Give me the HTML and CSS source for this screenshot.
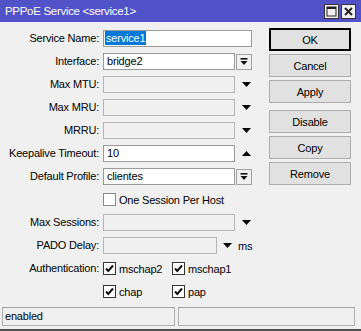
FILE: index.html
```html
<!DOCTYPE html>
<html>
<head>
<meta charset="utf-8">
<link rel="stylesheet" href="styles.css">
</head>
<body>
<div class="window">
  <div class="titlebar">
    <span class="title">PPPoE Service &lt;service1&gt;</span>
    <div class="tbtns">
      <span class="tbtn"><svg width="13" height="13" viewBox="0 0 13 13"><rect x="2" y="2" width="9" height="9" fill="none" stroke="#222" stroke-width="1"/><rect x="2" y="2" width="9" height="2" fill="#222"/></svg></span>
      <span class="tbtn"><svg width="13" height="13" viewBox="0 0 13 13"><path d="M3 3 L10 10 M10 3 L3 10" stroke="#222" stroke-width="2"/></svg></span>
    </div>
  </div>
  <div class="main">
    <div class="form">
      <label class="lbl">Service Name:</label>
      <div class="ctl"><div class="inp en full"><span class="sel">service1</span></div></div>

      <label class="lbl">Interface:</label>
      <div class="ctl"><div class="inp en w132">bridge2</div><span class="ddbtn"><svg width="10" height="10" viewBox="0 0 10 10"><rect x="1.5" y="1" width="7" height="1.6" fill="#111"/><polygon points="1.5,4 8.5,4 5,8" fill="#111"/></svg></span></div>

      <label class="lbl">Max MTU:</label>
      <div class="ctl"><div class="inp dis w132"></div><span class="arr"><svg width="9" height="5" viewBox="0 0 9 5"><polygon points="0,0 9,0 4.5,5" fill="#000"/></svg></span></div>

      <label class="lbl">Max MRU:</label>
      <div class="ctl"><div class="inp dis w132"></div><span class="arr"><svg width="9" height="5" viewBox="0 0 9 5"><polygon points="0,0 9,0 4.5,5" fill="#000"/></svg></span></div>

      <label class="lbl">MRRU:</label>
      <div class="ctl"><div class="inp dis w132"></div><span class="arr"><svg width="9" height="5" viewBox="0 0 9 5"><polygon points="0,0 9,0 4.5,5" fill="#000"/></svg></span></div>

      <label class="lbl">Keepalive Timeout:</label>
      <div class="ctl"><div class="inp en w132">10</div><span class="arr"><svg width="9" height="5" viewBox="0 0 9 5"><polygon points="0,5 9,5 4.5,0" fill="#000"/></svg></span></div>

      <label class="lbl">Default Profile:</label>
      <div class="ctl"><div class="inp en w132">clientes</div><span class="ddbtn"><svg width="10" height="10" viewBox="0 0 10 10"><rect x="1.5" y="1" width="7" height="1.6" fill="#111"/><polygon points="1.5,4 8.5,4 5,8" fill="#111"/></svg></span></div>

      <span class="lbl"></span>
      <div class="ctl"><span class="cb off"></span><span class="cbtext">One Session Per Host</span></div>

      <label class="lbl">Max Sessions:</label>
      <div class="ctl"><div class="inp dis w132"></div><span class="arr"><svg width="9" height="5" viewBox="0 0 9 5"><polygon points="0,0 9,0 4.5,5" fill="#000"/></svg></span></div>

      <label class="lbl">PADO Delay:</label>
      <div class="ctl"><div class="inp dis w114"></div><span class="arr2"><svg width="9" height="5" viewBox="0 0 9 5"><polygon points="0,0 9,0 4.5,5" fill="#000"/></svg></span><span class="unit">ms</span></div>

      <label class="lbl">Authentication:</label>
      <div class="cbrow">
        <span class="cbitem"><span class="cb on"><svg width="11" height="11" viewBox="0 0 11 11"><path d="M2 5.5 L4.3 8 L9 2.5" fill="none" stroke="#111" stroke-width="2"/></svg></span><span class="cbtext">mschap2</span></span>
        <span class="cbitem"><span class="cb on"><svg width="11" height="11" viewBox="0 0 11 11"><path d="M2 5.5 L4.3 8 L9 2.5" fill="none" stroke="#111" stroke-width="2"/></svg></span><span class="cbtext">mschap1</span></span>
      </div>

      <span class="lbl"></span>
      <div class="cbrow">
        <span class="cbitem"><span class="cb on"><svg width="11" height="11" viewBox="0 0 11 11"><path d="M2 5.5 L4.3 8 L9 2.5" fill="none" stroke="#111" stroke-width="2"/></svg></span><span class="cbtext">chap</span></span>
        <span class="cbitem"><span class="cb on"><svg width="11" height="11" viewBox="0 0 11 11"><path d="M2 5.5 L4.3 8 L9 2.5" fill="none" stroke="#111" stroke-width="2"/></svg></span><span class="cbtext">pap</span></span>
      </div>
    </div>
    <div class="buttons">
      <div class="btn default">OK</div>
      <div class="btn">Cancel</div>
      <div class="btn">Apply</div>
      <div class="btn gap">Disable</div>
      <div class="btn">Copy</div>
      <div class="btn">Remove</div>
    </div>
  </div>
  <div class="statusbar">
    <div class="sbox left">enabled</div>
    <div class="sbox right"></div>
  </div>
</div>
</body>
</html>
```

FILE: styles.css
```css
* { box-sizing: border-box; }
html, body { margin: 0; padding: 0; background: #f0f0f0; }
body {
  font-family: "Liberation Sans", Arial, sans-serif;
  font-size: 11px;
  color: #000;
  letter-spacing: -0.2px;
}
.window {
  width: 361px;
  height: 331px;
  display: flex;
  flex-direction: column;
  background: #f0f0f0;
  border-bottom: 2px solid #505050;
}
.titlebar {
  height: 22px;
  background: #5152c8;
  color: #fff;
  display: flex;
  align-items: center;
  justify-content: space-between;
  padding: 0 5px 0 5px;
  font-size: 11.5px;
}
.title { letter-spacing: -0.3px; }
.tbtns { display: flex; gap: 2px; }
.tbtn {
  width: 15px;
  height: 15px;
  background: #f0f0f0;
  border: 1px solid #333;
  display: flex;
  align-items: center;
  justify-content: center;
}
.main {
  height: 285px;
  display: flex;
}
.form {
  width: 269px;
  padding-top: 8px;
  display: grid;
  grid-template-columns: 99px 166px;
  grid-auto-rows: 17px;
  row-gap: 6px;
  column-gap: 4px;
  align-content: start;
}
.lbl {
  text-align: right;
  line-height: 17px;
  white-space: nowrap;
}
.ctl {
  display: flex;
  align-items: center;
  height: 17px;
}
.inp {
  height: 17px;
  border: 1px solid #a3a3a3;
  padding: 0 3px;
  line-height: 15px;
  white-space: nowrap;
  overflow: hidden;
}
.inp.en { background: #fff; border-color: #9a9a9a; }
.inp.dis { background: #f0f0f0; border-color: #b5b5b5; }
.full { width: 149px; padding-left: 1px; }
.w132 { width: 132px; }
.w114 { width: 114px; }
.sel {
  background: #0078d7;
  color: #fff;
  display: inline-block;
  line-height: 14px;
  padding: 0 1px;
}
.ddbtn {
  width: 16px;
  height: 16px;
  margin-left: 1px;
  border: 1px solid #a0a0a0;
  background: #f0f0f0;
  display: flex;
  align-items: center;
  justify-content: center;
}
.arr {
  width: 17px;
  display: flex;
  justify-content: center;
  padding-left: 5px;
}
.arr2 {
  display: flex;
  margin-left: 6px;
}
.unit { margin-left: 6px; color: #000030; }
.cb {
  width: 13px;
  height: 13px;
  border: 1px solid #333;
  background: #fff;
  display: flex;
  align-items: center;
  justify-content: center;
  flex: none;
}
.cb.off { border-color: #8a8a8a; }
.cbtext { margin-left: 3px; white-space: nowrap; }
.cbrow {
  display: grid;
  grid-template-columns: 69px 80px;
  align-items: center;
  height: 17px;
}
.cbitem {
  display: flex;
  align-items: center;
}
.buttons {
  padding-top: 6px;
  display: flex;
  flex-direction: column;
  gap: 3px;
}
.btn {
  width: 82px;
  height: 23px;
  border: 1px solid #adadad;
  background: #e1e1e1;
  display: flex;
  align-items: center;
  justify-content: center;
}
.btn.default {
  border: 1px solid #000;
  box-shadow: inset 0 0 0 1px #000;
}
.btn.gap { margin-top: 4px; }
.statusbar {
  display: flex;
  gap: 3px;
  padding: 0 3px 0 2px;
}
.sbox {
  height: 19px;
  border: 1px solid #b0b0b0;
  border-top-color: #a0a0a0;
  line-height: 17px;
  padding-left: 2px;
}
.left { width: 173px; }
.right { width: 177px; }
```
